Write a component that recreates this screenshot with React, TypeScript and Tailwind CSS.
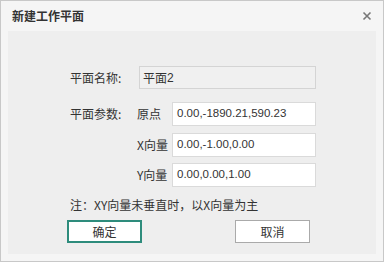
import React from "react";

const cjk = { fontFamily: '"Noto Sans CJK SC", "Noto Sans", sans-serif' };
const num = { fontFamily: '"Liberation Sans", "Noto Sans CJK SC", sans-serif' };

function Field({ value }: { value: string }) {
  return (
    <div className="h-[24px] flex items-center px-[4px] text-[11.5px] text-[#333] border bg-white border-[#dadada]">
      <span style={num}>{value}</span>
    </div>
  );
}

export default function App() {
  return (
    <div className="w-[384px] h-[262px] bg-[#f5f5f5] border border-[#c8c8c8] flex flex-col" style={cjk}>
      <div className="h-[30px] flex items-center justify-between pl-[11px] pr-[10px]">
        <span className="text-[12px] font-bold text-[#333]">新建工作平面</span>
        <svg width="10" height="10" viewBox="0 0 10 10" className="mr-[1px]">
          <path d="M1.5 1.5 L8.5 8.5 M8.5 1.5 L1.5 8.5" stroke="#777" strokeWidth="1.6" />
        </svg>
      </div>
      <div className="mx-[7px] h-[223px] bg-[#eeeeee] pl-[62px] pr-[60px] pt-[35px] text-[12px] text-[#333]">
        <div className="flex items-center h-[23px]">
          <span className="w-[69px]">平面名称:</span>
          <div className="flex-1">
            <div className="h-[23px] flex items-center px-[3px] bg-[#f0f0f0] border border-[#d4d4d4]">
              <span>平面</span><span style={num}>2</span>
            </div>
          </div>
        </div>
        <div className="flex items-center h-[24px] mt-[13px]">
          <span className="w-[67px]">平面参数:</span>
          <span className="w-[35px]">原点</span>
          <div className="flex-1"><Field value="0.00,-1890.21,590.23" /></div>
        </div>
        <div className="flex items-center h-[24px] mt-[7px]">
          <span className="w-[67px]"></span>
          <span className="w-[35px]">X向量</span>
          <div className="flex-1"><Field value="0.00,-1.00,0.00" /></div>
        </div>
        <div className="flex items-center h-[24px] mt-[6px]">
          <span className="w-[67px]"></span>
          <span className="w-[35px]">Y向量</span>
          <div className="flex-1"><Field value="0.00,0.00,1.00" /></div>
        </div>
        <div className="mt-[9px] h-[18px] flex items-center">注：XY向量未垂直时，以X向量为主</div>
        <div className="flex justify-between mt-[6px]">
          <button className="-ml-[3px] w-[75px] h-[23px] bg-white border-2 border-[#2e8c7c] text-[12px] text-[#333]">确定</button>
          <button className="mr-[6px] w-[75px] h-[23px] bg-white border border-[#aaaaaa] text-[12px] text-[#333]">取消</button>
        </div>
      </div>
    </div>
  );
}
